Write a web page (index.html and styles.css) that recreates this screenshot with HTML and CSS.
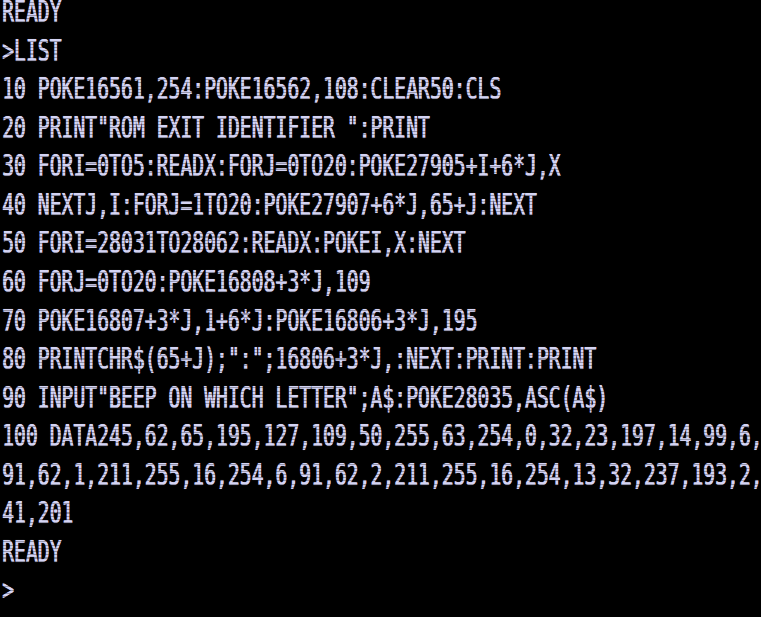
FILE: index.html
```html
<!DOCTYPE html>
<html>
<head>
<meta charset="utf-8">
<link rel="stylesheet" href="styles.css">
</head>
<body>
<div class="crt">
  <div class="screen">
    <div class="ln">READY</div>
    <div class="ln">&gt;LIST</div>
    <div class="ln">10 POKE16561,254:POKE16562,108:CLEAR50:CLS</div>
    <div class="ln">20 PRINT"ROM EXIT IDENTIFIER ":PRINT</div>
    <div class="ln">30 FORI=0TO5:READX:FORJ=0TO20:POKE27905+I+6*J,X</div>
    <div class="ln">40 NEXTJ,I:FORJ=1TO20:POKE27907+6*J,65+J:NEXT</div>
    <div class="ln">50 FORI=28031TO28062:READX:POKEI,X:NEXT</div>
    <div class="ln">60 FORJ=0TO20:POKE16808+3*J,109</div>
    <div class="ln">70 POKE16807+3*J,1+6*J:POKE16806+3*J,195</div>
    <div class="ln">80 PRINTCHR$(65+J);":";16806+3*J,:NEXT:PRINT:PRINT</div>
    <div class="ln">90 INPUT"BEEP ON WHICH LETTER";A$:POKE28035,ASC(A$)</div>
    <div class="ln">100 DATA245,62,65,195,127,109,50,255,63,254,0,32,23,197,14,99,6,</div>
    <div class="ln">91,62,1,211,255,16,254,6,91,62,2,211,255,16,254,13,32,237,193,2,</div>
    <div class="ln">41,201</div>
    <div class="ln">READY</div>
    <div class="ln">&gt;</div>
  </div>
</div>
</body>
</html>
```
FILE: styles.css
```css
html, body {
  margin: 0;
  padding: 0;
  background: #000;
  overflow: hidden;
}
.crt {
  position: relative;
  width: 761px;
  height: 617px;
  overflow: hidden;
  background: #000;
}
.crt::after {
  content: "";
  position: absolute;
  inset: 0;
  background: repeating-linear-gradient(to bottom, rgba(0,0,0,0) 0px, rgba(0,0,0,0) 2.1px, rgba(0,0,0,0.3) 2.1px, rgba(0,0,0,0.3) 3.21px);
  pointer-events: none;
}
.screen {
  width: 1191px;
  margin-top: -2px;
  padding-left: 3px;
  transform: scaleX(0.639);
  transform-origin: 0 0;
  font-family: "DejaVu Sans Mono", monospace;
  font-size: 30.9px;
  color: #d4d4f4;
  text-shadow: 0.8px 0 0 #d4d4f4, 0 0 1px rgba(214,214,246,0.6);
}
.ln {
  height: 38.5625px;
  line-height: 26px;
  white-space: pre;
}
```
